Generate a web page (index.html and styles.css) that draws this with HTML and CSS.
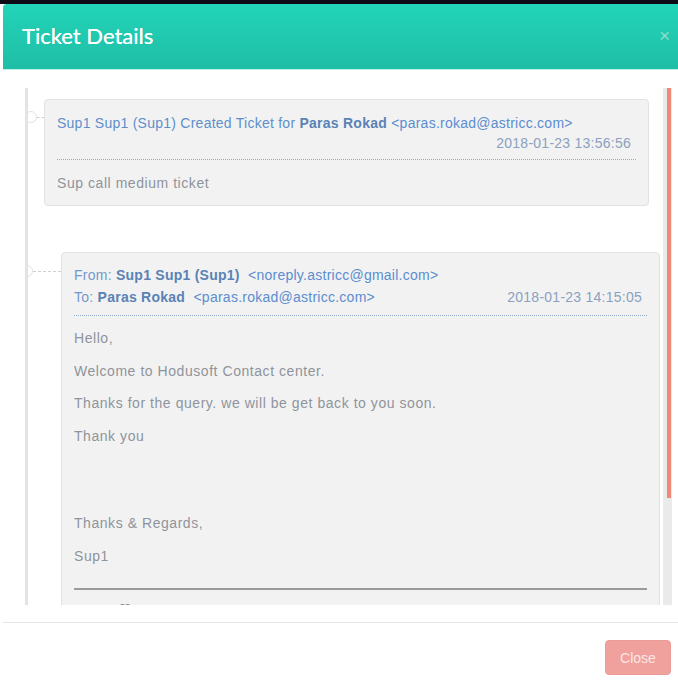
FILE: index.html
```html
<!DOCTYPE html>
<html>
<head>
<meta charset="utf-8">
<link rel="stylesheet" href="styles.css">
</head>
<body>
<div class="topbar"></div>
<div class="modal">
  <div class="modal-header">
    <h4 class="modal-title">Ticket Details</h4>
    <span class="close-x">×</span>
  </div>
  <div class="modal-body">
    <div class="timeline">
      <div class="item item-note">
        <span class="dot"></span><span class="dash"></span>
        <div class="card">
          <div class="card-head">
            <div class="line">Sup1 Sup1 (Sup1) Created Ticket for <b>Paras Rokad</b> <span class="mail">&lt;paras.rokad@astricc.com&gt;</span></div>
            <div class="date">2018-01-23 13:56:56</div>
          </div>
          <p class="text note-text">Sup call medium ticket</p>
        </div>
      </div>
      <div class="item item-mail">
        <span class="dot"></span><span class="dash"></span>
        <div class="card">
          <div class="card-head mail-head">
            <div class="line">From: <b>Sup1 Sup1 (Sup1)</b>&nbsp; <span class="mail">&lt;noreply.astricc@gmail.com&gt;</span></div>
            <div class="line to-line"><span>To: <b>Paras Rokad</b>&nbsp; <span class="mail">&lt;paras.rokad@astricc.com&gt;</span></span><span class="date">2018-01-23 14:15:05</span></div>
          </div>
          <div class="mail-body">
            <p class="text">Hello,</p>
            <p class="text">Welcome to Hodusoft Contact center.</p>
            <p class="text">Thanks for the query. we will be get back to you soon.</p>
            <p class="text">Thank you</p>
            <p class="text signoff">Thanks &amp; Regards,</p>
            <p class="text">Sup1</p>
            <hr class="rule">
            <p class="text tail">--</p>
          </div>
        </div>
      </div>
    </div>
    <div class="scrollbar"><div class="thumb"></div></div>
  </div>
  <div class="modal-footer">
    <button class="btn-close">Close</button>
  </div>
</div>
</body>
</html>
```
FILE: styles.css
```css
* { box-sizing: border-box; }
html, body { margin: 0; padding: 0; background: #ffffff; }
body {
  width: 678px;
  height: 685px;
  overflow: hidden;
  font-family: "Liberation Sans", Arial, sans-serif;
}
.topbar {
  height: 4px;
  background: #0c0b16;
}
.modal {
  margin-left: 3px;
  background: #ffffff;
}
.modal-header {
  height: 66px;
  background: linear-gradient(#22d4b8, #1fbea6);
  border-bottom: 1px solid #bfeee5;
  border-top-left-radius: 4px;
  display: flex;
  align-items: center;
  justify-content: space-between;
  padding: 0 8px 0 19px;
}
.modal-title {
  margin: 0;
  font-family: "Lato", sans-serif;
  font-weight: 400;
  font-size: 22px;
  color: #ffffff;
  padding-bottom: 2px;
  text-shadow: 0 0 0.4px #ffffff;
}
.close-x {
  color: #8fdccd;
  font-size: 19px;
  font-family: "Liberation Sans", Arial, sans-serif;
  padding-bottom: 2px;
}
.modal-body {
  display: flex;
  height: 552px;
  padding: 18px 6px 17px 22px;
}
.timeline {
  flex: 1;
  border-left: 3px solid #e3e3e3;
  overflow: hidden;
  height: 517px;
  padding-top: 11px;
}
.item { position: relative; }
.item-note { margin: 0 13px 46px 16px; }
.item-mail { margin: 0 2px 0 33px; }
.dot {
  position: absolute;
  width: 12px;
  height: 12px;
  border-radius: 50%;
  background: #ffffff;
  border: 1px solid #e2e2e2;
}
.dash {
  position: absolute;
  height: 0;
  border-top: 1px dashed #cfcfcf;
}
.item-note .dot { left: -19px; top: 12px; }
.item-note .dash { left: -7px; width: 7px; top: 18px; }
.item-mail .dot { left: -40px; top: 13px; }
.item-mail .dash { left: -28px; width: 28px; top: 19px; }
.card {
  background: #f2f2f2;
  border: 1px solid #e2e2e2;
  border-radius: 4px;
  padding: 13px 12px 12px 12px;
  font-size: 14px;
  line-height: 20px;
}
.card-head {
  color: #5f8fcb;
  border-bottom: 1px dotted #94abc9;
  padding-bottom: 6px;
  letter-spacing: 0.25px;
}
.card-head b { color: #5a82b5; }
.mail { color: #5b8dd0; }
.date {
  color: #8aa1bf;
  text-align: right;
  padding-right: 5px;
}
.text {
  margin: 0;
  color: #8f949c;
  letter-spacing: 0.55px;
}
.note-text { margin-top: 13px; }
.item-mail .card { padding-top: 11px; height: 400px; }
.mail-head { line-height: 22px; padding-bottom: 7px; }
.mail-head .line:first-child { color: #7399cb; }
.to-line {
  display: flex;
  justify-content: space-between;
  color: #7399cb;
}
.mail-body { padding-top: 12px; }
.mail-body .text { margin-bottom: 12.67px; }
.mail-body .signoff { margin-top: 67px; }
.rule {
  border: 0;
  border-top: 2px solid #9a9a9a;
  margin: 22px 0 4px 0;
}
.tail { padding-left: 46px; }
.scrollbar {
  width: 9px;
  height: 517px;
  margin-left: 1px;
  background: #eaeaea;
  display: flex;
  justify-content: flex-end;
}
.thumb {
  width: 4px;
  height: 410px;
  margin-right: 1px;
  background: #ee8b78;
}
.modal-footer {
  border-top: 1px solid #e8e8e8;
  display: flex;
  justify-content: flex-end;
  padding: 17px 7px 0 0;
}
.btn-close {
  width: 66px;
  height: 35px;
  background: #f0a19d;
  border: 1px solid #eb9a96;
  border-radius: 4px;
  color: #fbe6e5;
  font-family: "Liberation Sans", Arial, sans-serif;
  font-size: 14px;
  padding: 0;
}
```
